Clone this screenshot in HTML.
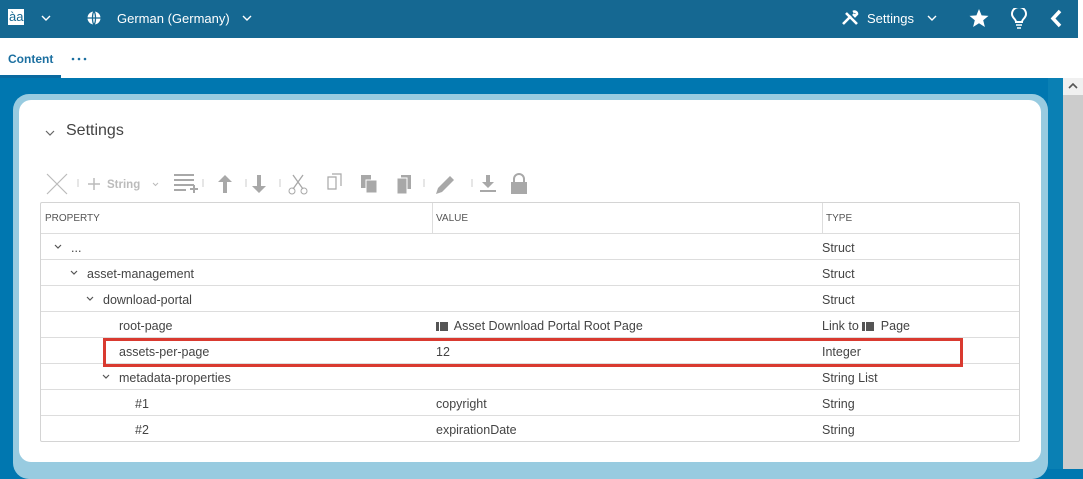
<!DOCTYPE html>
<html><head><meta charset="utf-8"><style>
*{margin:0;padding:0;box-sizing:border-box}
body{width:1083px;height:469px;overflow:hidden;font-family:"Liberation Sans",sans-serif;background:#0077b0;position:relative}
.top{position:absolute;left:0;top:0;width:1078px;height:38px;background:#156892;color:#fff;font-size:13px}
.top span{position:absolute;top:11px}
.tabs{position:absolute;left:0;top:38px;width:1078px;height:40px;background:#fff}
.sb{position:absolute;left:1078px;top:0;width:5px;height:78px;background:#fff}
.scroll{position:absolute;left:1063px;top:78px;width:20px;height:391px;background:#ccc}
.scroll .up{position:absolute;left:0;top:0;width:20px;height:17px;background:#f0f0f0}
.blue{position:absolute;left:1048px;top:78px;width:15px;height:391px;background:#0a80b4}
.outer{position:absolute;left:13px;top:94px;width:1035px;height:385px;background:#98cbe0;border-radius:16px}
.inner{position:absolute;left:19px;top:100px;width:1022px;height:362px;background:#fff;border-radius:12px}
.tbl{position:absolute;left:40px;top:202px;width:980px;height:240px;border:1px solid #d4d4d4;border-radius:2px}
.row{position:absolute;left:0;width:978px;height:26px;border-bottom:1px solid #ddd;font-size:12.5px;color:#444}
.row span{position:absolute;top:7px}
.row svg{position:absolute;top:10px}
.hdr{font-size:10px;color:#555}
.vl{position:absolute;top:0;width:1px;height:31px;background:#ddd}
.pg{display:inline-block;width:12px;height:9px;background:#555;position:relative;vertical-align:-1px;margin-right:3px}
.pg:after{content:"";position:absolute;left:3px;top:0;width:1px;height:9px;background:#fff}
</style></head><body>
<div class="top">
 <span style="left:8px;top:9px;background:#fff;color:#156892;font-size:13px;line-height:16px;padding:0 1px">àa</span>
 <svg style="position:absolute;left:41px;top:15px" width="10" height="7"><path d="M1 1l4 4 4-4" stroke="#fff" stroke-width="1.4" fill="none"/></svg>
 <svg style="position:absolute;left:87px;top:11px" width="14" height="14" viewBox="0 0 14 14"><circle cx="7" cy="7" r="6.5" fill="#fff"/><path d="M0 7h14M7 0.5c-2 2-2 11 0 13M7 .5c2 2 2 11 0 13" stroke="#156892" stroke-width="1.3" fill="none"/></svg>
 <span style="left:117px">German (Germany)</span>
 <svg style="position:absolute;left:242px;top:15px" width="10" height="7"><path d="M1 1l4 4 4-4" stroke="#fff" stroke-width="1.4" fill="none"/></svg>
 <svg style="position:absolute;left:841px;top:10px" width="18" height="16" viewBox="0 0 18 16"><path d="M2 14L10 6M5 3l4 4M16 14L8 6M12 2c2-1 4 0 4 2l-2 2-2-2" stroke="#fff" stroke-width="2.6" fill="none"/></svg>
 <span style="left:867px">Settings</span>
 <svg style="position:absolute;left:927px;top:15px" width="10" height="7"><path d="M1 1l4 4 4-4" stroke="#fff" stroke-width="1.4" fill="none"/></svg>
 <svg style="position:absolute;left:969px;top:9px" width="20" height="19" viewBox="0 0 20 19"><path d="M10 0l2.6 6.4 6.9.5-5.3 4.4 1.7 6.7L10 14.3 4.1 18l1.7-6.7L.5 6.9l6.9-.5z" fill="#fff"/></svg>
 <svg style="position:absolute;left:1011px;top:8px" width="16" height="21" viewBox="0 0 16 21"><path d="M5 14c0-3-4-4-4-8a7 7 0 0114 0c0 4-4 5-4 8z" stroke="#fff" stroke-width="2" fill="none"/><path d="M5 17h6M6 20h4" stroke="#fff" stroke-width="1.6"/></svg>
 <svg style="position:absolute;left:1050px;top:9px" width="12" height="19" viewBox="0 0 12 19"><path d="M10 2L3 9.5 10 17" stroke="#fff" stroke-width="3.5" fill="none"/></svg>
</div>
<div class="tabs">
 <div style="position:absolute;left:8px;top:14px;font-size:12px;font-weight:bold;color:#1b6fa0">Content</div>
 <svg style="position:absolute;left:71px;top:19px" width="16" height="4"><circle cx="2" cy="2" r="1.3" fill="#1b6fa0"/><circle cx="8" cy="2" r="1.3" fill="#1b6fa0"/><circle cx="14" cy="2" r="1.3" fill="#1b6fa0"/></svg>
 <div style="position:absolute;left:0;top:37px;width:61px;height:3px;background:#0a6aa0"></div>
</div>
<div class="sb"></div>
<div class="blue"></div>
<div class="scroll"><div class="up"><svg style="position:absolute;left:5px;top:5px" width="10" height="7"><path d="M1 5l4-4 4 4" stroke="#555" stroke-width="1.6" fill="none"/></svg></div></div>
<div class="outer"></div>
<div class="inner"></div>
<svg style="position:absolute;left:45px;top:130px" width="10" height="7"><path d="M1 1l4 4 4-4" stroke="#666" stroke-width="1.2" fill="none"/></svg>
<div style="position:absolute;left:66px;top:122px;font-size:16px;color:#444">Settings</div>
<svg style="position:absolute;left:40px;top:170px" width="500" height="28" viewBox="0 0 500 28" fill="#a8a8a8" stroke="#a8a8a8">
 <path d="M7 4l20 20M27 4L7 24" stroke-width="1.2" fill="none" stroke="#bbb"/>
 <path d="M38 9v8M163 9v8M206 9v8M240 9v8M384 9v8M432 9v8" stroke="#ccc"/>
 <path d="M48 14h12M54 8v12" stroke="#bbb" stroke-width="1.5" fill="none"/>
 <text x="67" y="18" font-size="11.5" font-weight="bold" fill="#bbb" stroke="none" font-family="Liberation Sans">String</text>
 <path d="M113 13l2.5 2.5 2.5-2.5" stroke="#bbb" fill="none"/>
 <path d="M134 5h20M134 10h20M134 15h20M134 20h12M150 19h8M154 15v8" stroke-width="2" fill="none"/>
 <path d="M185 5l-7 7h5v11h4V12h5z" stroke="none"/>
 <path d="M219 23l-7-7h5V5h4v11h5z" stroke="none"/>
 <path d="M253 5l10 14M263 5l-10 14" stroke-width="1.3" fill="none"/><circle cx="252" cy="21" r="3" fill="none"/><circle cx="264" cy="21" r="3" fill="none"/>
 <path d="M288 7h8v12h-8zM292 4h9v12" stroke-width="1.2" fill="none"/>
 <rect x="321" y="5" width="10" height="13" stroke="none"/><rect x="326" y="10" width="11" height="13" stroke="#fff" fill="#a8a8a8"/>
 <rect x="361" y="5" width="10" height="14" stroke="none"/><rect x="357" y="8" width="10" height="16" stroke="#fff"/>
 <path d="M396 24l2-6 12-12 4 4-12 12z" stroke="none"/>
 <path d="M440 21h16" stroke-width="2"/><path d="M448 18l-6-6h4V5h4v7h4z" stroke="none"/>
 <rect x="471" y="12" width="16" height="12" stroke="none"/><path d="M474 12V9a5 5 0 0110 0v3" stroke-width="2" fill="none"/>
</svg>
<div class="tbl">
 <div class="row hdr" style="top:0;height:31px"><span style="left:4px;top:10px">PROPERTY</span><span style="left:395px;top:10px">VALUE</span><span style="left:785px;top:10px">TYPE</span><div class="vl" style="left:391px"></div><div class="vl" style="left:781px"></div></div>
 <div class="row" style="top:31px"><svg style="left:13px" width="8" height="6"><path d="M1 1l3 3 3-3" stroke="#555" stroke-width="1.2" fill="none"/></svg><span style="left:30px">...</span><span style="left:781px">Struct</span></div>
 <div class="row" style="top:57px"><svg style="left:29px" width="8" height="6"><path d="M1 1l3 3 3-3" stroke="#555" stroke-width="1.2" fill="none"/></svg><span style="left:46px">asset-management</span><span style="left:781px">Struct</span></div>
 <div class="row" style="top:83px"><svg style="left:45px" width="8" height="6"><path d="M1 1l3 3 3-3" stroke="#555" stroke-width="1.2" fill="none"/></svg><span style="left:62px">download-portal</span><span style="left:781px">Struct</span></div>
 <div class="row" style="top:109px"><span style="left:78px">root-page</span><span style="left:395px"><i class="pg"></i> Asset Download Portal Root Page</span><span style="left:781px">Link to <i class="pg"></i> Page</span></div>
 <div class="row" style="top:135px"><span style="left:78px">assets-per-page</span><span style="left:395px">12</span><span style="left:781px">Integer</span></div>
 <div class="row" style="top:161px"><svg style="left:61px" width="8" height="6"><path d="M1 1l3 3 3-3" stroke="#555" stroke-width="1.2" fill="none"/></svg><span style="left:78px">metadata-properties</span><span style="left:781px">String List</span></div>
 <div class="row" style="top:187px"><span style="left:94px">#1</span><span style="left:395px">copyright</span><span style="left:781px">String</span></div>
 <div class="row" style="top:213px;border-bottom:none"><span style="left:94px">#2</span><span style="left:395px">expirationDate</span><span style="left:781px">String</span></div>
</div>
<div style="position:absolute;left:103px;top:338px;width:860px;height:29px;border:3px solid #d93a30"></div>
</body></html>
